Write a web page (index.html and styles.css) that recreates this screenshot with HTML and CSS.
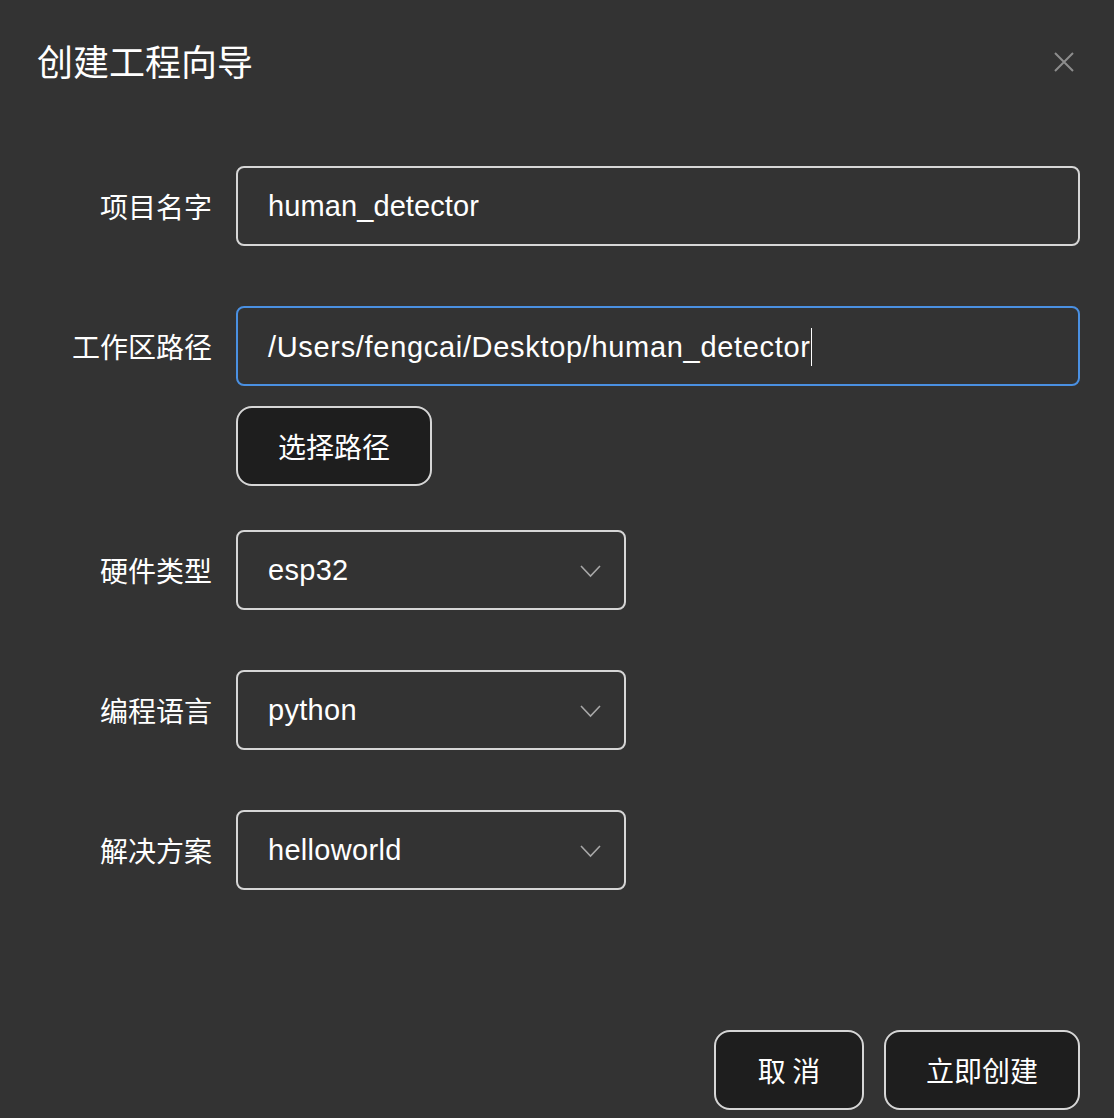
FILE: index.html
```html
<!DOCTYPE html>
<html lang="zh-CN">
<head>
<meta charset="utf-8">
<title>创建工程向导</title>
<link rel="stylesheet" href="styles.css">
</head>
<body>
<div class="dialog">
  <header class="dialog-header">
    <h1 class="dialog-title">创建工程向导</h1>
    <button class="close-btn" aria-label="关闭">
      <svg width="20" height="20" viewBox="0 0 20 20"><path d="M1 1 L19 19 M19 1 L1 19" stroke="#8d8d8d" stroke-width="2" fill="none"/></svg>
    </button>
  </header>
  <div class="form">
    <div class="field">
      <div class="label">项目名字</div>
      <div class="control">
        <div class="input">human_detector</div>
      </div>
    </div>
    <div class="field field-path">
      <div class="label label-top">工作区路径</div>
      <div class="control">
        <div class="input input-focus"><span class="path-text">/Users/fengcai/Desktop/human_detector</span><span class="caret"></span></div>
        <button class="btn btn-path">选择路径</button>
      </div>
    </div>
    <div class="field">
      <div class="label">硬件类型</div>
      <div class="control">
        <div class="select"><span>esp32</span><svg class="chev" width="21" height="13" viewBox="0 0 21 13"><path d="M1 1 L10.5 11 L20 1" stroke="#a8a8a8" stroke-width="1.6" fill="none"/></svg></div>
      </div>
    </div>
    <div class="field">
      <div class="label">编程语言</div>
      <div class="control">
        <div class="select"><span>python</span><svg class="chev" width="21" height="13" viewBox="0 0 21 13"><path d="M1 1 L10.5 11 L20 1" stroke="#a8a8a8" stroke-width="1.6" fill="none"/></svg></div>
      </div>
    </div>
    <div class="field">
      <div class="label">解决方案</div>
      <div class="control">
        <div class="select"><span>helloworld</span><svg class="chev" width="21" height="13" viewBox="0 0 21 13"><path d="M1 1 L10.5 11 L20 1" stroke="#a8a8a8" stroke-width="1.6" fill="none"/></svg></div>
      </div>
    </div>
  </div>
  <footer class="dialog-footer">
    <button class="btn btn-cancel">取 消</button>
    <button class="btn btn-create">立即创建</button>
  </footer>
</div>
</body>
</html>
```
FILE: styles.css
```css
* { box-sizing: border-box; }
html, body {
  margin: 0;
  padding: 0;
  background: #333333;
}
body {
  font-family: "Liberation Sans", "Noto Sans CJK SC", sans-serif;
  color: #ffffff;
}
.dialog {
  height: 1118px;
  display: flex;
  flex-direction: column;
  padding: 0 34px 8px 37px;
}
.dialog-header {
  height: 120px;
  display: flex;
  align-items: center;
  justify-content: space-between;
  margin-bottom: 4px;
}
.dialog-title {
  margin: 0;
  font-family: "Noto Sans CJK SC", sans-serif;
  font-weight: 400;
  font-size: 36px;
  line-height: 1;
  color: #ffffff;
}
.close-btn {
  background: none;
  border: 0;
  padding: 0;
  margin-right: 6px;
  margin-top: 4px;
  width: 20px;
  height: 20px;
  display: flex;
}
.form {
  margin-top: 42px;
  display: flex;
  flex-direction: column;
}
.field {
  display: flex;
  align-items: center;
  margin-bottom: 60px;
}
.field-path {
  align-items: flex-start;
  margin-bottom: 44px;
}
.label {
  width: 175px;
  flex: none;
  text-align: right;
  font-family: "Noto Sans CJK SC", sans-serif;
  font-size: 28px;
  line-height: 40px;
  margin-right: 24px;
}
.label-top { margin-top: 20px; }
.control {
  flex: 1;
  display: flex;
  flex-direction: column;
  align-items: flex-start;
  gap: 20px;
}
.input {
  width: 100%;
  height: 80px;
  border: 2px solid #d6d6d6;
  border-radius: 8px;
  padding: 0 30px;
  display: flex;
  align-items: center;
  font-size: 29px;
  letter-spacing: 0.1px;
  color: #ffffff;
}
.path-text {
  letter-spacing: 0.68px;
  padding-top: 2px;
}
.input-focus {
  border-color: #4a90e2;
}
.caret {
  display: inline-block;
  width: 1.5px;
  height: 38px;
  background: #ffffff;
  margin-left: 0;
  margin-top: 2px;
}
.select {
  width: 390px;
  height: 80px;
  border: 2px solid #d6d6d6;
  border-radius: 8px;
  padding: 0 23px 0 30px;
  display: flex;
  align-items: center;
  justify-content: space-between;
  font-size: 29px;
  letter-spacing: 0.3px;
}
.chev { flex: none; margin-top: 2px; }
.btn {
  height: 80px;
  background: #1e1e1e;
  border: 2px solid #d6d6d6;
  border-radius: 16px;
  color: #ffffff;
  font-family: "Noto Sans CJK SC", sans-serif;
  font-size: 28px;
  padding: 0;
  display: flex;
  align-items: center;
  justify-content: center;
}
.btn-path { width: 196px; }
.dialog-footer {
  margin-top: auto;
  display: flex;
  justify-content: flex-end;
  gap: 20px;
}
.btn-cancel { width: 150px; }
.btn-create { width: 196px; }
```
